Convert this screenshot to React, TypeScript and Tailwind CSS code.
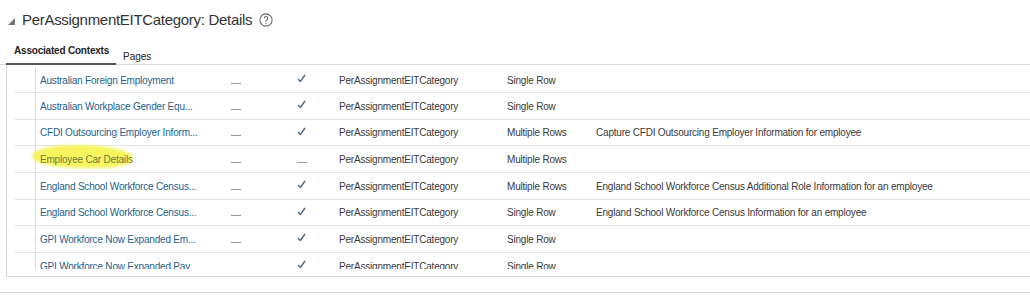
import React from "react";

type Row = { name: string; dash2: boolean; type: string; desc: string; hl?: boolean };

const rows: Row[] = [
  { name: "Australian Foreign Employment", dash2: false, type: "Single Row", desc: "" },
  { name: "Australian Workplace Gender Equ...", dash2: false, type: "Single Row", desc: "" },
  { name: "CFDI Outsourcing Employer Inform...", dash2: false, type: "Multiple Rows", desc: "Capture CFDI Outsourcing Employer Information for employee" },
  { name: "Employee Car Details", dash2: true, type: "Multiple Rows", desc: "", hl: true },
  { name: "England School Workforce Census...", dash2: false, type: "Multiple Rows", desc: "England School Workforce Census Additional Role Information for an employee" },
  { name: "England School Workforce Census...", dash2: false, type: "Single Row", desc: "England School Workforce Census Information for an employee" },
  { name: "GPI Workforce Now Expanded Em...", dash2: false, type: "Single Row", desc: "" },
  { name: "GPI Workforce Now Expanded Pay", dash2: false, type: "Single Row", desc: "" },
];

const heights = ["h-[25px]", "h-[27px]", "h-[26px]", "h-[27px]", "h-[27px]", "h-[26px]", "h-[27px]", "h-[27px]"];

function Dash() {
  return <span className="inline-block w-[10px] h-px bg-[#9a9a9a] mt-[6px]" />;
}

function Check() {
  return (
    <svg width="9" height="9" viewBox="0 0 9 9" className="mb-[3px]">
      <path d="M1 5 L3.4 7.5 L8 1" fill="none" stroke="#4a6a8c" strokeWidth="1.4" />
    </svg>
  );
}

export default function App() {
  return (
    <div className="w-[1030px] h-[298px] bg-white overflow-hidden text-[#3a3a3a]" style={{ fontFamily: '"Liberation Sans", Arial, sans-serif' }}>
      {/* title */}
      <div className="flex items-center h-[40px] pl-[8px]">
        <svg width="7" height="7" viewBox="0 0 7 7" className="mt-[2px]">
          <polygon points="7,0 7,7 0,7" fill="#777" />
        </svg>
        <span className="ml-[7px] text-[15px] text-[#333] tracking-[-0.3px]">PerAssignmentEITCategory: Details</span>
        <svg width="14" height="14" viewBox="0 0 16 16" className="ml-[7px]">
          <circle cx="8" cy="8" r="7" fill="none" stroke="#666" strokeWidth="1.2" />
          <path d="M5.9 6.1 A2.1 2.1 0 1 1 8.7 8.1 C8.2 8.3 8 8.7 8 9.3 V9.9" fill="none" stroke="#666" strokeWidth="1.2" />
          <circle cx="8" cy="12" r="0.8" fill="#666" />
        </svg>
      </div>
      {/* tabs */}
      <div className="flex h-[25px] border-b border-[#dcdcdc]">
        <div className="ml-[6px] w-[110px] h-[25px] flex items-start pl-[8px] pt-[3px] border-b-2 border-[#4e5a4c] whitespace-nowrap">
          <span className="text-[10px] font-bold text-[#222] tracking-[-0.2px]">Associated Contexts</span>
        </div>
        <div className="pl-[7px] pt-[3px]">
          <span className="text-[10px] text-[#222]">Pages</span>
        </div>
      </div>
      {/* table */}
      <div className="ml-[6px] border-l border-b border-[#dcdcdc] h-[212px] flex flex-col">
        <div className="h-[204px] overflow-hidden">
          <div className="h-[3px]" />
          {rows.map((r, i) => (
            <div key={i} className={`flex ${heights[i]} text-[10px] tracking-[-0.2px]`}>
              <div className="w-[8px] shrink-0" />
              <div className="w-[21px] shrink-0 border-r border-[#dcdcdc] border-b border-b-[#e4e4e4]" />
              <div className="flex-1 flex items-center border-b border-[#e4e4e4]">
                <div className="w-[195px] shrink-0 pl-[4px] whitespace-nowrap relative">
                  {r.hl ? (
                    <>
                      <span className="absolute left-[-4px] top-[-7px] w-[100px] h-[23px] bg-[#f6f55e] rounded-[45%_55%_35%_50%] blur-[1.5px]" />
                      <span className="relative text-[#6d7c3d]">{r.name}</span>
                    </>
                  ) : (
                    <span className="text-[#25628a]">{r.name}</span>
                  )}
                </div>
                <div className="w-[66px] shrink-0 flex"><Dash /></div>
                <div className="w-[42px] shrink-0 flex">{r.dash2 ? <Dash /> : <Check />}</div>
                <div className="w-[168px] shrink-0">PerAssignmentEITCategory</div>
                <div className="w-[89px] shrink-0">{r.type}</div>
                <div className="flex-1 whitespace-nowrap">{r.desc}</div>
              </div>
            </div>
          ))}
        </div>
      </div>
      <div className="mt-[15px] border-t border-[#dcdcdc]" />
    </div>
  );
}
